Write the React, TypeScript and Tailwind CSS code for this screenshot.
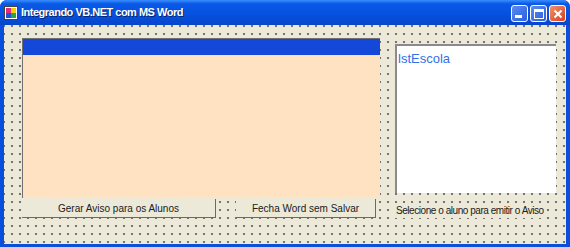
export default function App() {
  return (
    <div className="w-[570px] h-[247px] overflow-hidden bg-[#0a4fdc] rounded-t-[7px] flex flex-col font-['Liberation_Sans',Arial,sans-serif]">
      {/* title bar */}
      <div className="h-[25px] shrink-0 flex items-center pl-[4px] pr-[4px] bg-[linear-gradient(#3a8dff_0%,#0a5ae6_15%,#0550e0_60%,#0846c8_100%)]">
        <svg width="14" height="14" viewBox="0 0 14 14" className="mr-[3px]">
          <rect x="0.5" y="0.5" width="13" height="13" fill="#fff" stroke="#444" />
          <rect x="2" y="2" width="5" height="5" fill="#e0307a" />
          <rect x="7" y="2" width="5" height="5" fill="#f5d000" />
          <rect x="2" y="7" width="5" height="5" fill="#2050d8" />
          <rect x="7" y="7" width="5" height="5" fill="#30a040" />
        </svg>
        <span className="text-white font-bold text-[11px] tracking-[-0.5px] [text-shadow:1px_1px_0_#0a246a]">Integrando VB.NET com MS Word</span>
        <div className="ml-auto flex gap-[2px] mt-[2px]">
          <div className="w-[17px] h-[17px] rounded-[3px] border border-white bg-[linear-gradient(135deg,#5c8cf0,#2a5ee0)] flex items-end justify-start pl-[3px] pb-[3px]">
            <div className="w-[7px] h-[3px] bg-white" />
          </div>
          <div className="w-[17px] h-[17px] rounded-[3px] border border-white bg-[linear-gradient(135deg,#5c8cf0,#2a5ee0)] flex items-center justify-center">
            <div className="w-[10px] h-[10px] border border-white border-t-[3px]" />
          </div>
          <div className="w-[17px] h-[17px] rounded-[3px] border border-white bg-[linear-gradient(135deg,#f09070,#d8401c)] flex items-center justify-center">
            <svg width="10" height="10" viewBox="0 0 10 10">
              <path d="M1.5 1.5 L8.5 8.5 M8.5 1.5 L1.5 8.5" stroke="#fff" strokeWidth="2" />
            </svg>
          </div>
        </div>
      </div>
      {/* body */}
      <div className="flex-1 mx-[4px] mb-[3px] bg-[#ece9d8] bg-[radial-gradient(#6f6f6f_0.7px,transparent_0.9px)] bg-[length:8px_8px] bg-[position:4px_5px] pt-[13px] pl-[18px] pr-[10px]">
        <div className="flex">
          <div className="w-[358px] h-[160px] shrink-0 border-t border-l border-[#707070] flex flex-col bg-[#ffe2c2]">
            <div className="h-[16px] bg-[#1448d8]" />
          </div>
          <div className="ml-[15px] mt-[6px] w-[161px] h-[149px] shrink-0 bg-white border-t-2 border-l-2 border-[#8a8a8a] px-[1px]">
            <span className="text-[#3070e8] text-[13px] leading-[15px]">lstEscola</span>
          </div>
        </div>
        <div className="flex items-center mt-[1px] whitespace-nowrap">
          <div className="w-[194px] h-[19px] shrink-0 bg-[#ece9d8] border-b border-r border-[#6a6a6a] flex items-center justify-center text-[10px] text-[#202020]">
            Gerar Aviso para os Alunos
          </div>
          <div className="ml-[20px] w-[140px] h-[19px] shrink-0 bg-[#ece9d8] border-b border-r border-[#6a6a6a] flex items-center justify-center text-[10px] text-[#202020]">
            Fecha Word sem Salvar
          </div>
          <div className="ml-[18px] mt-[3px] px-[2px] bg-[#ece9d8] text-[10px] tracking-[-0.45px] text-[#202020]">
            Selecione o aluno para emitir o Aviso
          </div>
        </div>
      </div>
    </div>
  );
}
